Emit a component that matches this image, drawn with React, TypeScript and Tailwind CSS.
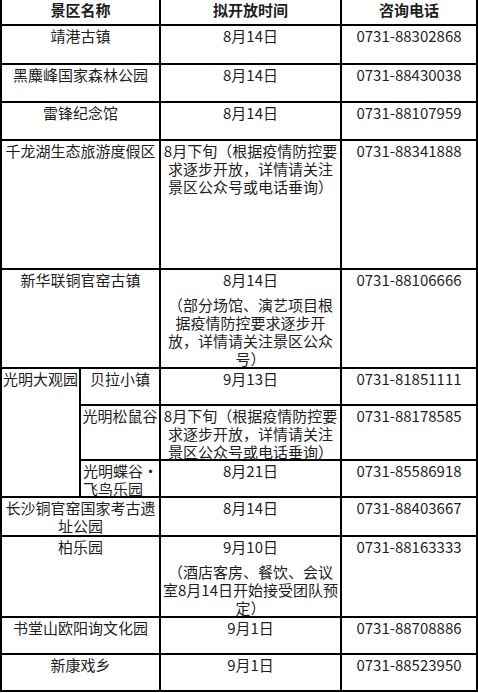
import React from 'react';

type Row = {
  name: string;
  time: string[][]; // paragraphs -> lines
  phone: string;
};

const LATE_AUG = [['8月下旬（根据疫情防控要', '求逐步开放，详情请关注', '景区公众号或电话垂询）']];

const topRows: Row[] = [
  { name: '靖港古镇', time: [['8月14日']], phone: '0731-88302868' },
  { name: '黑麋峰国家森林公园', time: [['8月14日']], phone: '0731-88430038' },
  { name: '雷锋纪念馆', time: [['8月14日']], phone: '0731-88107959' },
  { name: '千龙湖生态旅游度假区', time: LATE_AUG, phone: '0731-88341888' },
  {
    name: '新华联铜官窑古镇',
    time: [['8月14日'], ['（部分场馆、演艺项目根', '据疫情防控要求逐步开', '放，详情请关注景区公众', '号）']],
    phone: '0731-88106666',
  },
];

const bottomRows: Row[] = [
  { name: '长沙铜官窑国家考古遗址公园', time: [['8月14日']], phone: '0731-88403667' },
  {
    name: '柏乐园',
    time: [['9月10日'], ['（酒店客房、餐饮、会议', '室8月14日开始接受团队预', '定）']],
    phone: '0731-88163333',
  },
  { name: '书堂山欧阳询文化园', time: [['9月1日']], phone: '0731-88708886' },
  { name: '新康戏乡', time: [['9月1日']], phone: '0731-88523950' },
];

const cell = 'bg-white text-center pt-px';

const TimeCell: React.FC<{ time: string[][] }> = ({ time }) => (
  <div className={cell}>
    {time.map((para, i) => (
      <p key={i} className={i > 0 ? 'mt-[7px]' : ''}>
        {para.map((line, j) => (
          <React.Fragment key={j}>
            {j > 0 && <br />}
            {line}
          </React.Fragment>
        ))}
      </p>
    ))}
  </div>
);

const RowCells: React.FC<{ row: Row }> = ({ row }) => (
  <>
    <div className={`${cell} col-span-2`}>{row.name}</div>
    <TimeCell time={row.time} />
    <div className={cell}>{row.phone}</div>
  </>
);

export default function App() {
  return (
    <div
      className="w-[478px] h-[693px] bg-white text-[15px] leading-[18px] text-[#1e1e1e]"
      style={{ fontFamily: '"Noto Sans CJK SC", "Noto Sans", sans-serif' }}
    >
      <div className="grid grid-cols-[77px_78px_179px_134px] grid-rows-[24px_37px_36px_36px_127px_97px_35px_53px_35px_37px_79px_35px_35px] gap-[2px] bg-black px-[2px] pb-[2px]">
        <div className={`${cell} col-span-2 font-bold`}>景区名称</div>
        <div className={`${cell} font-bold`}>拟开放时间</div>
        <div className={`${cell} font-bold`}>咨询电话</div>

        {topRows.map((r) => (
          <RowCells key={r.name} row={r} />
        ))}

        {/* 光明大观园 group */}
        <div className={`${cell} row-span-3`}>光明大观园</div>
        <div className={cell}>贝拉小镇</div>
        <TimeCell time={[['9月13日']]} />
        <div className={cell}>0731-81851111</div>

        <div className={cell}>光明松鼠谷</div>
        <TimeCell time={LATE_AUG} />
        <div className={cell}>0731-88178585</div>

        <div className="bg-white pt-px pl-[2px] text-left whitespace-nowrap">
          光明蝶谷·
          <br />
          飞鸟乐园
        </div>
        <TimeCell time={[['8月21日']]} />
        <div className={cell}>0731-85586918</div>

        {bottomRows.map((r) => (
          <RowCells key={r.name} row={r} />
        ))}
      </div>
    </div>
  );
}
